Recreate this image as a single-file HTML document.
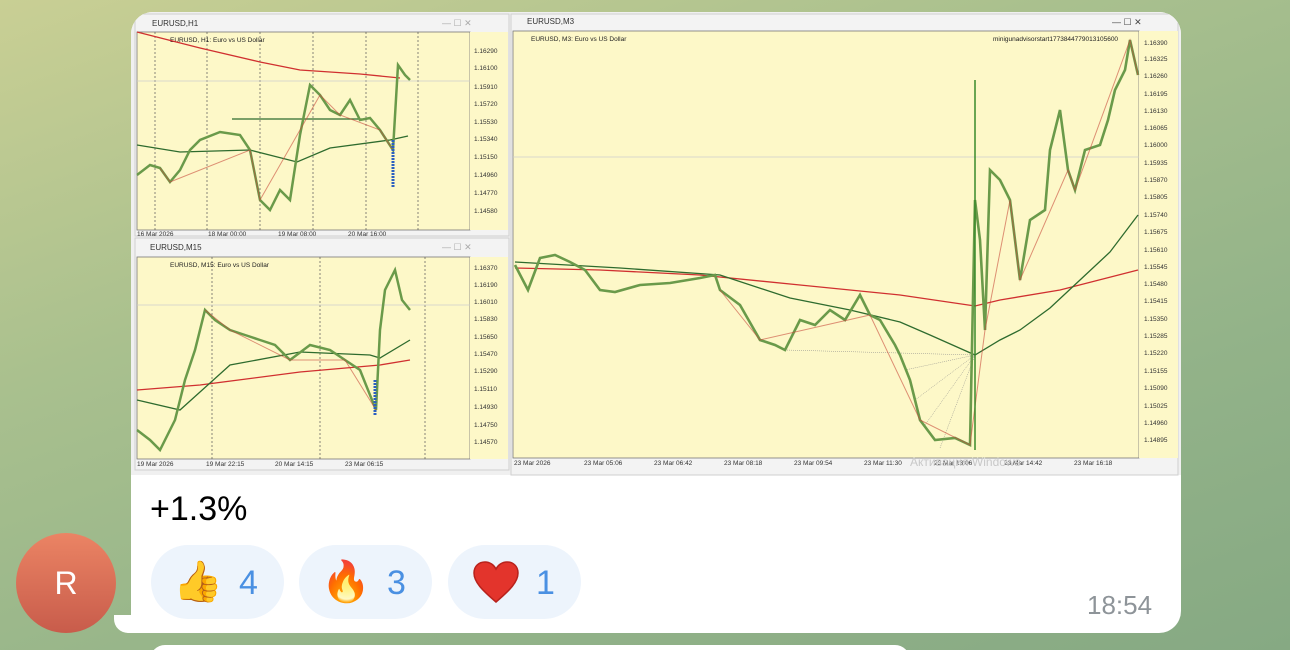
<!DOCTYPE html>
<html><head><meta charset="utf-8"><style>
html,body{margin:0;padding:0;width:1290px;height:650px;overflow:hidden;font-family:"Liberation Sans",sans-serif}
body{background:linear-gradient(160deg,#c9cf94 0%,#a9c08e 35%,#93b389 70%,#86a983 100%);position:relative}
.bubble{position:absolute;left:131px;top:12px;width:1050px;height:621px;background:#fff;border-radius:22px 22px 22px 0}
.tail{position:absolute;left:114px;top:615px;width:30px;height:18px;background:#fff;border-radius:0 0 0 14px}
.av{position:absolute;left:16px;top:533px;width:100px;height:100px;border-radius:50%;background:linear-gradient(#eb8464,#c85c4b);color:#fff;font-size:32px;text-align:center;line-height:100px}
.txt{position:absolute;left:150px;top:490px;font-size:34px;color:#000}
.pill{position:absolute;top:545px;height:74px;width:133px;border-radius:37px;background:#edf4fc}
.pill span.e{position:absolute;left:22px;top:14px;font-size:40px;line-height:46px}
.pill span.n{position:absolute;left:88px;top:16px;font-size:34px;color:#4a90e2;line-height:44px}
.time{position:absolute;left:1087px;top:590px;font-size:26px;color:#8e9499}
.next{position:absolute;left:150px;top:645px;width:760px;height:30px;background:#fff;border-radius:16px}
</style></head><body>
<div class="av">R</div>
<div class="tail"></div>
<div class="bubble"></div>
<div class="next"></div>
<svg style="position:absolute;left:0;top:0" width="1290" height="650" font-family="Liberation Sans, sans-serif">
<defs><clipPath id="cb"><rect x="131" y="12" width="1050" height="500" rx="22"/></clipPath></defs>
<g clip-path="url(#cb)">
<rect x="131" y="12" width="1050" height="463" fill="#f0f0f0"/>
<rect x="135" y="14" width="374" height="222" fill="#f3f3f3" stroke="#cfcfcf"/>
<text x="152" y="26" font-size="8" fill="#333">EURUSD,H1</text>
<text x="442" y="26" font-size="9" fill="#aaa">—  ☐  ✕</text>
<rect x="137" y="32" width="333" height="198" fill="#fdf8c8" stroke="#777" stroke-width="0.8"/>
<rect x="470" y="32" width="38" height="198" fill="#fdf8c8"/>
<g stroke="#555" stroke-dasharray="2,2" stroke-width="0.7"><line x1="155" y1="32" x2="155" y2="230"/><line x1="207" y1="32" x2="207" y2="230"/><line x1="260" y1="32" x2="260" y2="230"/><line x1="313" y1="32" x2="313" y2="230"/><line x1="366" y1="32" x2="366" y2="230"/><line x1="418" y1="32" x2="418" y2="230"/></g>
<line x1="137" y1="81" x2="470" y2="81" stroke="#ccc" stroke-width="0.7"/>
<text x="170" y="42" font-size="6.5" fill="#222">EURUSD, H1:  Euro vs US Dollar</text>
<g font-size="6.5" fill="#333"><text x="474" y="53">1.16290</text><text x="474" y="70">1.16100</text><text x="474" y="89">1.15910</text><text x="474" y="106">1.15720</text><text x="474" y="124">1.15530</text><text x="474" y="141">1.15340</text><text x="474" y="159">1.15150</text><text x="474" y="177">1.14960</text><text x="474" y="195">1.14770</text><text x="474" y="213">1.14580</text></g>
<g font-size="6.5" fill="#333"><text x="137" y="236">16 Mar 2026</text><text x="208" y="236">18 Mar 00:00</text><text x="278" y="236">19 Mar 08:00</text><text x="348" y="236">20 Mar 16:00</text></g>
<polyline points="137,32 200,48 260,62 300,70 360,74 400,78" fill="none" stroke="#d03030" stroke-width="1.3"/>
<polyline points="137,145 180,152 250,150 297,162 330,148 390,140 408,136" fill="none" stroke="#2e6b2e" stroke-width="1.3"/>
<line x1="232" y1="119" x2="362" y2="119" stroke="#2e6b2e" stroke-width="1.2"/>
<polyline points="137,175 150,165 160,168 170,182 180,170 190,150 200,140 220,132 240,135 250,150 260,200 270,210 280,190 290,200 300,135 310,85 320,95 330,110 340,115 350,100 360,120 370,118 380,130 393,150 398,65 405,75 410,80" fill="none" stroke="#6a9a4a" stroke-width="2.5"/>
<polyline points="160,168 170,182 250,150 260,200 320,95 340,115 380,130 393,150" fill="none" stroke="#c84a3a" stroke-width="1" opacity="0.6"/>
<line x1="393" y1="140" x2="393" y2="188" stroke="#2b5fc0" stroke-width="3" stroke-dasharray="2,1"/>
<rect x="135" y="238" width="374" height="232" fill="#f3f3f3" stroke="#cfcfcf"/>
<text x="150" y="250" font-size="8" fill="#333">EURUSD,M15</text>
<text x="442" y="250" font-size="9" fill="#aaa">—  ☐  ✕</text>
<rect x="137" y="257" width="333" height="202" fill="#fdf8c8" stroke="#777" stroke-width="0.8"/>
<rect x="470" y="257" width="38" height="202" fill="#fdf8c8"/>
<g stroke="#555" stroke-dasharray="2,2" stroke-width="0.7"><line x1="212" y1="257" x2="212" y2="459"/><line x1="320" y1="257" x2="320" y2="459"/><line x1="425" y1="257" x2="425" y2="459"/></g>
<line x1="137" y1="305" x2="470" y2="305" stroke="#ccc" stroke-width="0.7"/>
<text x="170" y="267" font-size="6.5" fill="#222">EURUSD, M15:  Euro vs US Dollar</text>
<g font-size="6.5" fill="#333"><text x="474" y="270">1.16370</text><text x="474" y="287">1.16190</text><text x="474" y="304">1.16010</text><text x="474" y="321">1.15830</text><text x="474" y="339">1.15650</text><text x="474" y="356">1.15470</text><text x="474" y="373">1.15290</text><text x="474" y="391">1.15110</text><text x="474" y="409">1.14930</text><text x="474" y="427">1.14750</text><text x="474" y="444">1.14570</text></g>
<g font-size="6.5" fill="#333"><text x="137" y="466">19 Mar 2026</text><text x="206" y="466">19 Mar 22:15</text><text x="275" y="466">20 Mar 14:15</text><text x="345" y="466">23 Mar 06:15</text></g>
<polyline points="137,390 200,385 300,372 380,365 410,360" fill="none" stroke="#d03030" stroke-width="1.3"/>
<polyline points="137,400 180,410 230,365 300,352 370,355 380,358 410,340" fill="none" stroke="#2e6b2e" stroke-width="1.3"/>
<polyline points="137,430 150,440 160,450 175,420 185,380 195,350 205,310 215,320 230,330 245,335 260,340 275,345 290,360 310,345 330,350 345,360 360,370 376,410 380,330 385,290 395,270 402,300 410,310" fill="none" stroke="#6a9a4a" stroke-width="2.5"/>
<polyline points="205,310 230,330 290,360 345,360 376,410" fill="none" stroke="#c84a3a" stroke-width="1" opacity="0.6"/>
<line x1="375" y1="380" x2="375" y2="415" stroke="#2b5fc0" stroke-width="3" stroke-dasharray="2,1"/>
<rect x="511" y="14" width="667" height="461" fill="#f3f3f3" stroke="#cfcfcf"/>
<text x="527" y="24" font-size="8" fill="#333">EURUSD,M3</text>
<text x="1112" y="25" font-size="9" fill="#444">—  ☐  ✕</text>
<rect x="513" y="31" width="626" height="427" fill="#fdf8c8" stroke="#777" stroke-width="0.8"/>
<rect x="1139" y="31" width="39" height="427" fill="#fdf8c8"/>
<line x1="513" y1="157" x2="1139" y2="157" stroke="#ccc" stroke-width="0.7"/>
<text x="531" y="41" font-size="6.5" fill="#222">EURUSD, M3:  Euro vs US Dollar</text>
<text x="993" y="41" font-size="6.5" fill="#222">minigunadvisorstart1773844779013105600</text>
<g font-size="6.5" fill="#333"><text x="1144" y="45">1.16390</text><text x="1144" y="78">1.16260</text><text x="1144" y="113">1.16130</text><text x="1144" y="147">1.16000</text><text x="1144" y="182">1.15870</text><text x="1144" y="217">1.15740</text><text x="1144" y="252">1.15610</text><text x="1144" y="286">1.15480</text><text x="1144" y="321">1.15350</text><text x="1144" y="355">1.15220</text><text x="1144" y="390">1.15090</text><text x="1144" y="425">1.14960</text><text x="1144" y="61">1.16325</text><text x="1144" y="96">1.16195</text><text x="1144" y="130">1.16065</text><text x="1144" y="165">1.15935</text><text x="1144" y="199">1.15805</text><text x="1144" y="234">1.15675</text><text x="1144" y="269">1.15545</text><text x="1144" y="303">1.15415</text><text x="1144" y="338">1.15285</text><text x="1144" y="373">1.15155</text><text x="1144" y="408">1.15025</text><text x="1144" y="442">1.14895</text></g>
<g font-size="6.5" fill="#333"><text x="514" y="465">23 Mar 2026</text><text x="584" y="465">23 Mar 05:06</text><text x="654" y="465">23 Mar 06:42</text><text x="724" y="465">23 Mar 08:18</text><text x="794" y="465">23 Mar 09:54</text><text x="864" y="465">23 Mar 11:30</text><text x="934" y="465">23 Mar 13:06</text><text x="1004" y="465">23 Mar 14:42</text><text x="1074" y="465">23 Mar 16:18</text></g>
<polyline points="515,268 600,270 700,275 800,285 900,295 975,306 1000,300 1060,290 1138,270" fill="none" stroke="#d03030" stroke-width="1.3"/>
<polyline points="515,262 620,268 720,275 790,298 850,310 900,322 930,335 975,355 1000,340 1020,330 1050,308 1080,280 1110,252 1138,215" fill="none" stroke="#2e6b2e" stroke-width="1.3"/>
<g stroke="#888" stroke-width="0.5" stroke-dasharray="1,1"><line x1="785" y1="350" x2="975" y2="355"/><line x1="905" y1="370" x2="975" y2="355"/><line x1="915" y1="400" x2="975" y2="355"/><line x1="925" y1="425" x2="975" y2="355"/><line x1="940" y1="448" x2="975" y2="355"/></g>
<polyline points="515,265 528,290 540,258 555,255 570,262 585,270 600,290 615,292 640,285 670,283 700,278 715,275 720,290 740,305 760,340 775,345 785,350 800,320 815,325 830,310 845,320 860,295 870,315 880,320 895,345 900,355 910,380 915,400 920,420 935,440 955,438 970,445 975,200 980,240 985,330 990,170 1000,180 1010,200 1020,280 1030,220 1045,210 1050,150 1060,110 1068,170 1075,190 1085,150 1100,145 1108,120 1115,90 1125,70 1130,40 1138,75" fill="none" stroke="#6a9a4a" stroke-width="2.6"/>
<polyline points="720,290 760,340 870,315 920,420 970,445 985,330 1010,200 1020,280 1068,170 1075,190 1130,40 1138,75" fill="none" stroke="#c84a3a" stroke-width="1" opacity="0.6"/>
<line x1="975" y1="80" x2="975" y2="450" stroke="#3a8a2a" stroke-width="1.5"/>
<text x="910" y="466" font-size="12" fill="#c8c8c8">Активация Windows</text>
</g>
</svg>
<div class="txt">+1.3%</div>
<div class="pill" style="left:151px"><span class="e">👍</span><span class="n">4</span></div>
<div class="pill" style="left:299px"><span class="e">🔥</span><span class="n">3</span></div>
<div class="pill" style="left:448px"><svg style="position:absolute;left:24px;top:15px" width="48" height="44" viewBox="0 0 48 44"><path d="M24 42 C10 30 2 22 2 13 C2 6 7 2 13 2 C18 2 22 5 24 9 C26 5 30 2 35 2 C41 2 46 6 46 13 C46 22 38 30 24 42Z" fill="#e3342c" stroke="#b8221c" stroke-width="1.5"/></svg><span class="n">1</span></div>
<div class="time">18:54</div>
</body></html>
